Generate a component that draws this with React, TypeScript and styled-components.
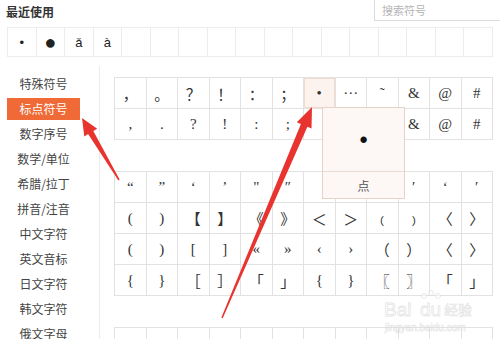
import React from 'react';
import styled, { createGlobalStyle } from 'styled-components';

const GlobalStyle = createGlobalStyle`
  html, body {
    margin: 0;
    padding: 0;
    background: #ffffff;
  }
`;

const Panel = styled.div`
  position: relative;
  width: 500px;
  height: 339px;
  overflow: hidden;
  background: #ffffff;
  font-family: 'Noto Sans CJK SC', 'Noto Sans', sans-serif;
  color: #333;
`;

const Header = styled.div`
  display: flex;
  justify-content: space-between;
  align-items: flex-start;
  height: 22px;
`;

const Title = styled.div`
  padding: 4px 0 0 6px;
  font-size: 12px;
  font-weight: 700;
  color: #333;
  line-height: 16px;
`;

const Search = styled.div`
  width: 126px;
  height: 21px;
  box-sizing: border-box;
  border: 1px solid #dcdcdc;
  border-top: none;
  border-right: none;
  padding-left: 7px;
  font-size: 11px;
  line-height: 20px;
  color: #b5b5b5;
`;

const RecentRow = styled.div`
  display: grid;
  grid-template-columns: repeat(17, 1fr);
  width: 486px;
  height: 30px;
  margin: 5px 0 0 7px;
  box-sizing: border-box;
  border-top: 1px solid #ececec;
  border-left: 1px solid #ececec;
`;

const RecentCell = styled.div<{ $big?: boolean }>`
  display: flex;
  align-items: center;
  justify-content: center;
  border-right: 1px solid #ececec;
  border-bottom: 1px solid #ececec;
  font-family: 'Liberation Sans', 'Noto Sans', sans-serif;
  font-size: ${(p) => (p.$big ? '20px' : '13px')};
  color: #222;
`;

const Body = styled.div`
  display: flex;
  margin-top: 9px;
`;

const Sidebar = styled.div`
  width: 100px;
  flex-shrink: 0;
  border-right: 1px solid #ececec;
  padding-top: 5px;
  height: 280px;
  box-sizing: border-box;
`;

const SideItem = styled.div`
  height: 25px;
  display: flex;
  align-items: center;
  padding-left: 7px;
`;

const SideLabel = styled.div<{ $active?: boolean }>`
  width: 73px;
  height: 22px;
  display: flex;
  align-items: center;
  justify-content: center;
  font-size: 12px;
  color: ${(p) => (p.$active ? '#ffffff' : '#444')};
  background: ${(p) => (p.$active ? '#f06a38' : 'transparent')};
`;

const SymbolArea = styled.div`
  padding: 11px 0 0 14px;
  display: flex;
  flex-direction: column;
  gap: 31px;
`;

const SymbolGrid = styled.div`
  display: grid;
  grid-template-columns: repeat(12, 31.5px);
  grid-auto-rows: 31px;
  border-top: 1px solid #e2e2e2;
  border-left: 1px solid #e2e2e2;
`;

const SymbolCell = styled.div<{ $selected?: boolean }>`
  display: flex;
  align-items: center;
  justify-content: center;
  box-sizing: border-box;
  border-right: 1px solid #e2e2e2;
  border-bottom: 1px solid #e2e2e2;
  background: ${(p) => (p.$selected ? '#fcf3ee' : '#ffffff')};
  box-shadow: ${(p) => (p.$selected ? 'inset 0 0 0 1px #f1dccf' : 'none')};
  font-family: 'Liberation Serif', 'Noto Sans CJK SC', serif;
  font-size: 15px;
  color: #333;
`;

const Popup = styled.div`
  position: absolute;
  left: 322px;
  top: 107px;
  width: 83px;
  height: 92px;
  box-sizing: border-box;
  border: 1px solid #e6d3c6;
  background: #fdf8f5;
  display: flex;
  flex-direction: column;
`;

const PopupGlyph = styled.div`
  flex: 1;
  display: flex;
  align-items: center;
  justify-content: center;
  font-family: 'Liberation Sans', sans-serif;
  font-size: 22px;
  font-weight: 700;
  color: #111;
`;

const PopupLabel = styled.div`
  height: 26px;
  border-top: 1px solid #eadbd1;
  display: flex;
  align-items: center;
  justify-content: center;
  font-size: 12px;
  color: #555;
`;

const Overlay = styled.svg`
  position: absolute;
  left: 0;
  top: 0;
  pointer-events: none;
`;

const recent = ['•', '●', 'ǎ', 'à'];

const categories = [
  '特殊符号',
  '标点符号',
  '数字序号',
  '数学/单位',
  '希腊/拉丁',
  '拼音/注音',
  '中文字符',
  '英文音标',
  '日文字符',
  '韩文字符',
  '俄文字母',
];

const punctuation = [
  '，', '。', '？', '！', '：', '；', '•', '···', '˜', '&', '@', '#',
  ',', '.', '?', '!', ':', ';', '', '', '', '&', '@', '#',
];

const brackets = [
  '“', '”', '‘', '’', '"', '″', '', '', '', '′', '‘', '′',
  '(', ')', '【', '】', '《', '》', '＜', '＞', '﹙', '﹚', '〈', '〉',
  '(', ')', '[', ']', '«', '»', '‹', '›', '（', '）', '〈', '〉',
  '{', '}', '［', '］', '「', '」', '{', '}', '〖', '〗', '「', '」',
];

type Pt = [number, number];

const arrowPoints = (tail: Pt, tip: Pt, tailW: number, neckW: number, headLen: number, headW: number): string => {
  const dx = tip[0] - tail[0];
  const dy = tip[1] - tail[1];
  const len = Math.hypot(dx, dy);
  const ux = dx / len;
  const uy = dy / len;
  const nx = -uy;
  const ny = ux;
  const neck: Pt = [tip[0] - ux * headLen, tip[1] - uy * headLen];
  const pts: Pt[] = [
    [tail[0] + (nx * tailW) / 2, tail[1] + (ny * tailW) / 2],
    [neck[0] + (nx * neckW) / 2, neck[1] + (ny * neckW) / 2],
    [neck[0] + (nx * headW) / 2, neck[1] + (ny * headW) / 2],
    tip,
    [neck[0] - (nx * headW) / 2, neck[1] - (ny * headW) / 2],
    [neck[0] - (nx * neckW) / 2, neck[1] - (ny * neckW) / 2],
    [tail[0] - (nx * tailW) / 2, tail[1] - (ny * tailW) / 2],
  ];
  return pts.map((p) => p.map((v) => v.toFixed(1)).join(',')).join(' ');
};

const App: React.FC = () => {
  return (
    <Panel>
      <GlobalStyle />
      <Header>
        <Title>最近使用</Title>
        <Search>搜索符号</Search>
      </Header>
      <RecentRow>
        {Array.from({ length: 17 }).map((_, i) => (
          <RecentCell key={i} $big={i === 1}>
            {recent[i] ?? ''}
          </RecentCell>
        ))}
      </RecentRow>
      <Body>
        <Sidebar>
          {categories.map((c) => (
            <SideItem key={c}>
              <SideLabel $active={c === '标点符号'}>{c}</SideLabel>
            </SideItem>
          ))}
        </Sidebar>
        <SymbolArea>
          <SymbolGrid>
            {punctuation.map((s, i) => (
              <SymbolCell key={i} $selected={i === 6}>
                {s}
              </SymbolCell>
            ))}
          </SymbolGrid>
          <SymbolGrid>
            {brackets.map((s, i) => (
              <SymbolCell key={i}>{s}</SymbolCell>
            ))}
          </SymbolGrid>
          <SymbolGrid>
            {Array.from({ length: 12 }).map((_, i) => (
              <SymbolCell key={i} />
            ))}
          </SymbolGrid>
        </SymbolArea>
      </Body>

      <Popup>
        <PopupGlyph>•</PopupGlyph>
        <PopupLabel>点</PopupLabel>
      </Popup>

      <Overlay width="500" height="339" viewBox="0 0 500 339">
        <g opacity="0.6">
          <text x="384" y="316" fontFamily="Liberation Sans, sans-serif" fontSize="19" fill="#ffffff" stroke="#d6d6d6" strokeWidth="0.8">
            Bai
          </text>
          <text x="420" y="316" fontFamily="Liberation Sans, sans-serif" fontSize="19" fill="#ffffff" stroke="#d6d6d6" strokeWidth="0.8">
            du
          </text>
          <circle cx="424" cy="296" r="2.5" fill="#ffffff" stroke="#d6d6d6" strokeWidth="0.8" />
          <circle cx="431" cy="293" r="2.5" fill="#ffffff" stroke="#d6d6d6" strokeWidth="0.8" />
          <circle cx="438" cy="296" r="2.5" fill="#ffffff" stroke="#d6d6d6" strokeWidth="0.8" />
          <text x="444" y="315" fontFamily="Noto Sans CJK SC, sans-serif" fontSize="14" fill="#ffffff" stroke="#d6d6d6" strokeWidth="0.7">
            经验
          </text>
          <text x="385" y="331" fontFamily="Liberation Sans, sans-serif" fontSize="10" fill="#ffffff" stroke="#d6d6d6" strokeWidth="0.6">
            jingyan.baidu.com
          </text>
        </g>
        <polygon points={arrowPoints([119, 180], [82, 118], 1.5, 6, 17, 15)} fill="#e8332f" />
        <polygon points={arrowPoints([222, 318], [312, 107], 1.5, 7, 20, 16)} fill="#e8332f" />
      </Overlay>
    </Panel>
  );
};

export default App;
